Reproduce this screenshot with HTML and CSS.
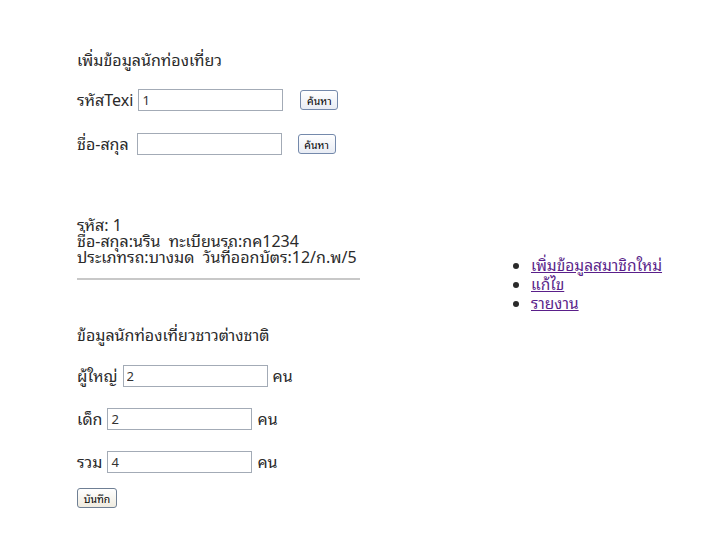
FILE: index.html
```html
<!DOCTYPE html>
<html lang="th">
<head>
<meta charset="utf-8">
<title>เพิ่มข้อมูลนักท่องเที่ยว</title>
<link rel="stylesheet" href="styles.css">
</head>
<body>
<div class="page">
  <div class="main">
    <p class="title">เพิ่มข้อมูลนักท่องเที่ยว</p>
    <div class="row row-first">
      <span class="label">รหัสTexi</span>
      <input class="field field-id" type="text" value="1">
      <button class="btn btn-search" type="button">ค้นหา</button>
    </div>
    <div class="row row-name">
      <span class="label label-name">ชื่อ-สกุล</span>
      <input class="field field-name" type="text" value="">
      <button class="btn btn-search btn-search-2" type="button">ค้นหา</button>
    </div>
    <div class="info">
      <div>รหัส: 1</div>
      <div>ชื่อ-สกุล:นริน&nbsp; ทะเบียนรถ:กค1234</div>
      <div>ประเภทรถ:บางมด&nbsp; วันที่ออกบัตร:12/ก.พ/5</div>
    </div>
    <hr class="rule">
    <p class="title title-2">ข้อมูลนักท่องเที่ยวชาวต่างชาติ</p>
    <div class="row row-count row-adult">
      <span class="label">ผู้ใหญ่</span>
      <input class="field field-count" type="text" value="2">
      <span class="unit">คน</span>
    </div>
    <div class="row row-count">
      <span class="label">เด็ก</span>
      <input class="field field-count" type="text" value="2">
      <span class="unit">คน</span>
    </div>
    <div class="row row-count">
      <span class="label">รวม</span>
      <input class="field field-count" type="text" value="4">
      <span class="unit">คน</span>
    </div>
    <div class="row row-save">
      <button class="btn btn-save" type="button">บันทึก</button>
    </div>
  </div>
  <div class="side">
    <ul class="links">
      <li><a href="#">เพิ่มข้อมูลสมาชิกใหม่</a></li>
      <li><a href="#">แก้ไข</a></li>
      <li><a href="#">รายงาน</a></li>
    </ul>
  </div>
</div>
</body>
</html>
```
FILE: styles.css
```css
html, body {
  margin: 0;
  padding: 0;
  background: #ffffff;
}
body {
  font-family: "Noto Sans", "Noto Sans Thai Looped", "Noto Sans Thai", sans-serif;
  font-size: 16px;
  line-height: 16px;
  color: #2a2a2a;
}
.page {
  display: flex;
  align-items: center;
  padding: 49px 0 0 77px;
}
.main {
  width: 283px;
  display: flex;
  flex-direction: column;
}
.title {
  margin: 0;
  height: 22px;
  line-height: 22px;
  white-space: nowrap;
}
.title-2 {
  margin-top: 44px;
}
.row {
  display: flex;
  align-items: center;
  height: 22px;
  white-space: nowrap;
}
.row-first {
  margin-top: 18px;
}
.row-name {
  margin-top: 22px;
}
.label {
  margin-right: 5px;
}
.label-name {
  margin-right: 8px;
}
.field {
  box-sizing: border-box;
  height: 22px;
  width: 145px;
  border: 1px solid #a3abb6;
  padding: 0 3px;
  font-family: "Noto Sans", sans-serif;
  font-size: 13px;
  color: #333333;
  background: #fff;
}
.btn {
  box-sizing: border-box;
  height: 20px;
  padding: 0 2px;
  border: 1px solid #7489ab;
  border-radius: 3px;
  background: linear-gradient(#ffffff, #e8ecf4);
  font-family: "Noto Sans", "Noto Sans Thai Looped", sans-serif;
  font-size: 10.5px;
  color: #000;
}
.btn-search {
  margin-left: 17px;
  width: 38px;
}
.btn-search-2 {
  margin-left: 16px;
}
.info {
  margin-top: 62px;
  white-space: nowrap;
}
.rule {
  width: 283px;
  margin: 13px 0 0 0;
  border: 0;
  border-top: 2px solid #c8c8c8;
}
.row-count {
  margin-top: 21px;
}
.row-adult {
  margin-top: 19px;
}
.unit {
  margin-left: 5px;
}
.row-save {
  margin-top: 14px;
}
.btn-save {
  width: 40px;
  border-color: #6f7f94;
  background: linear-gradient(#ffffff, #efebdf);
}
.side {
  margin-left: 156px;
  padding-top: 10px;
}
.links {
  margin: 0;
  padding-left: 15px;
  line-height: 19px;
  font-size: 15.5px;
  white-space: nowrap;
}
.links a {
  color: #5a1f8a;
}
```
